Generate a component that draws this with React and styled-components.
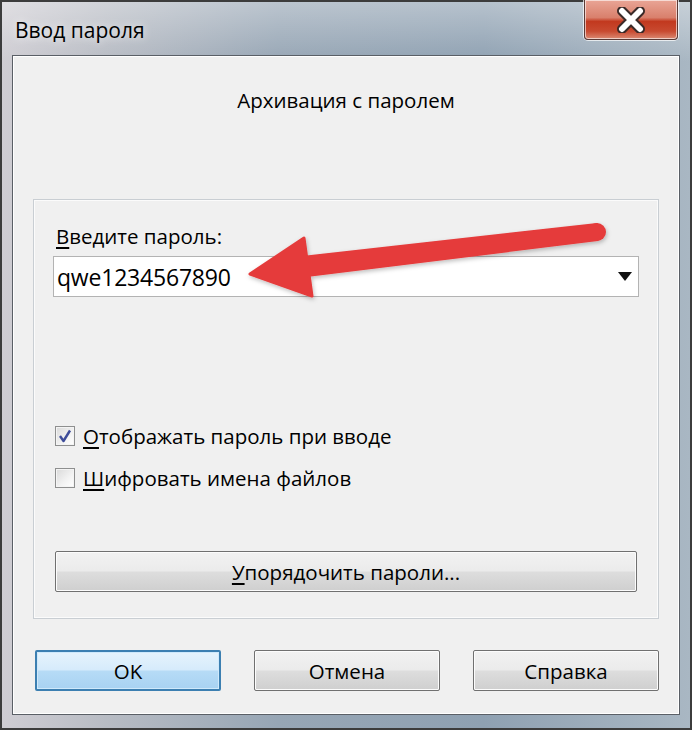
import styled, { createGlobalStyle } from "styled-components";

const Global = createGlobalStyle`
  body {
    margin: 0;
    background: #f0f0f0;
  }
`;

const Window = styled.div`
  position: relative;
  width: 692px;
  height: 730px;
  box-sizing: border-box;
  display: flex;
  flex-direction: column;
  border: 2px solid #3c3c3c;
  background:
    linear-gradient(to bottom, rgba(255, 255, 255, 0.35), rgba(255, 255, 255, 0) 60px),
    linear-gradient(to right, #cfcdd3 0%, #b8bcc4 15%, #97a6b5 40%, #8fa1b2 70%, #a9b7c3 100%);
  font-family: "Open Sans", "Noto Sans", sans-serif;
  color: #000;
`;

const TitleBar = styled.div`
  height: 53px;
  display: flex;
  align-items: flex-start;
  justify-content: space-between;
  padding-left: 13px;
  padding-right: 12px;
`;

const Title = styled.span`
  margin-top: 14px;
  font-size: 21px;
  line-height: 28px;
  text-shadow: 0 0 8px rgba(255, 255, 255, 0.9);
`;

const CloseButton = styled.div`
  width: 94px;
  height: 40px;
  margin-top: -2px;
  box-sizing: border-box;
  display: flex;
  align-items: center;
  justify-content: center;
  border: 1px solid #5a3a36;
  border-top: none;
  box-shadow: inset 0 0 0 1px rgba(255, 255, 255, 0.6), 0 0 0 1px rgba(255, 255, 255, 0.7);
  border-radius: 0 0 4px 4px;
  background: linear-gradient(to bottom, #e9a596 0%, #d9806c 45%, #c2391f 55%, #c84a30 80%, #dc8a73 100%);
`;

const Client = styled.div`
  flex: 1;
  margin: 0 10px 13px 10px;
  border: 1px solid #5a5f66;
  box-shadow: inset 0 0 0 1px #ffffff;
  background: #f0f0f0;
  display: flex;
  flex-direction: column;
  padding: 0 20px 0 20px;
`;

const Heading = styled.div`
  height: 88px;
  display: flex;
  align-items: center;
  justify-content: center;
  font-size: 20.5px;
`;

const Group = styled.div`
  margin-top: 55px;
  height: 420px;
  box-sizing: border-box;
  border: 1px solid #c9ced3;
  box-shadow: inset 0 0 0 1px #fbfbfb;
  display: flex;
  flex-direction: column;
  padding: 23px 21px 26px 21px;
`;

const Label = styled.div`
  font-size: 20.5px;
  line-height: 26px;
  padding-left: 1px;
`;

const Acc = styled.span`
  text-decoration: underline;
  text-underline-offset: 3px;
`;

const Combo = styled.div`
  margin: 7px -2px 0 -2px;
  height: 41px;
  box-sizing: border-box;
  border: 1px solid #b3b3b3;
  background: #fff;
  display: flex;
  align-items: center;
  justify-content: space-between;
  padding: 0 6px 0 3px;
  font-size: 23px;
  letter-spacing: -0.2px;
`;

const Checks = styled.div`
  margin-top: 128px;
  display: flex;
  flex-direction: column;
  gap: 20px;
`;

const CheckRow = styled.div`
  display: flex;
  align-items: center;
  gap: 8px;
  font-size: 20.5px;
  line-height: 22px;
`;

const Box = styled.div`
  width: 20px;
  height: 20px;
  box-sizing: border-box;
  border: 1px solid #8e8f8f;
  box-shadow: inset 0 0 0 1px #f4f4f4;
  background: linear-gradient(135deg, #d9d9d9 0%, #f3f3f3 60%, #ffffff 100%);
  display: flex;
  align-items: center;
  justify-content: center;
`;

const Spacer = styled.div`
  flex: 1;
`;

const Button = styled.div`
  height: 41px;
  box-sizing: border-box;
  display: flex;
  align-items: center;
  justify-content: center;
  border: ${(p) => (p.$primary ? "2px solid #3c7fb1" : "1px solid #707070")};
  border-radius: 2px;
  box-shadow: inset 0 0 0 1px ${(p) => (p.$primary ? "#cfe9fb" : "#fcfcfc")};
  background: ${(p) =>
    p.$primary
      ? "linear-gradient(to bottom, #e6f3fc 0%, #d6ebfb 48%, #b6dbf6 52%, #a8d2f2 100%)"
      : "linear-gradient(to bottom, #f2f2f2 0%, #ebebeb 48%, #dddddd 52%, #cfcfcf 100%)"};
  font-size: 20.5px;
  width: ${(p) => p.$width || "auto"};
`;

const Footer = styled.div`
  margin-top: 31px;
  display: flex;
  gap: 33px;
  padding-left: 2px;
`;

const ArrowLayer = styled.svg`
  position: absolute;
  left: 0;
  top: 0;
  pointer-events: none;
`;

export default function App() {
  return (
    <>
      <Global />
      <Window>
        <TitleBar>
          <Title>Ввод пароля</Title>
          <CloseButton>
            <svg width="30" height="26" viewBox="0 0 30 26">
              <path d="M6 4 L24 22 M24 4 L6 22" stroke="#3a2a28" strokeWidth="10" strokeLinecap="round" />
              <path d="M6 4 L24 22 M24 4 L6 22" stroke="#ffffff" strokeWidth="6" strokeLinecap="round" />
            </svg>
          </CloseButton>
        </TitleBar>
        <Client>
          <Heading>Архивация с паролем</Heading>
          <Group>
            <Label>
              <Acc>В</Acc>ведите пароль:
            </Label>
            <Combo>
              <span>qwe1234567890</span>
              <svg width="14" height="9" viewBox="0 0 14 9">
                <path d="M0 0 H14 L7 9 Z" fill="#111" />
              </svg>
            </Combo>
            <Checks>
              <CheckRow>
                <Box>
                  <svg width="14" height="14" viewBox="0 0 14 14">
                    <path d="M2 7 L5.5 12 L12 1.5" fill="none" stroke="#3d4c99" strokeWidth="2.4" strokeLinejoin="round" />
                  </svg>
                </Box>
                <span>
                  <Acc>О</Acc>тображать пароль при вводе
                </span>
              </CheckRow>
              <CheckRow>
                <Box />
                <span>
                  <Acc>Ш</Acc>ифровать имена файлов
                </span>
              </CheckRow>
            </Checks>
            <Spacer />
            <Button>
              <span>
                <Acc>У</Acc>порядочить пароли...
              </span>
            </Button>
          </Group>
          <Footer>
            <Button $primary $width="186px">OK</Button>
            <Button $width="186px">Отмена</Button>
            <Button $width="186px">Справка</Button>
          </Footer>
        </Client>
        <ArrowLayer width="692" height="730" viewBox="0 0 692 730">
          <defs>
            <filter id="sh" x="-10%" y="-30%" width="120%" height="160%">
              <feDropShadow dx="1" dy="2" stdDeviation="2" floodColor="#000" floodOpacity="0.25" />
            </filter>
          </defs>
          <g filter="url(#sh)" fill="#e53b3b">
            <path d="M595 221 Q605 229 596 239 L305 275 L300 254 Z" />
            <circle cx="595" cy="230" r="9" />
            <path d="M248 272 L302 236 L310 294 Z" strokeLinejoin="round" stroke="#e53b3b" strokeWidth="3" />
          </g>
        </ArrowLayer>
      </Window>
    </>
  );
}
